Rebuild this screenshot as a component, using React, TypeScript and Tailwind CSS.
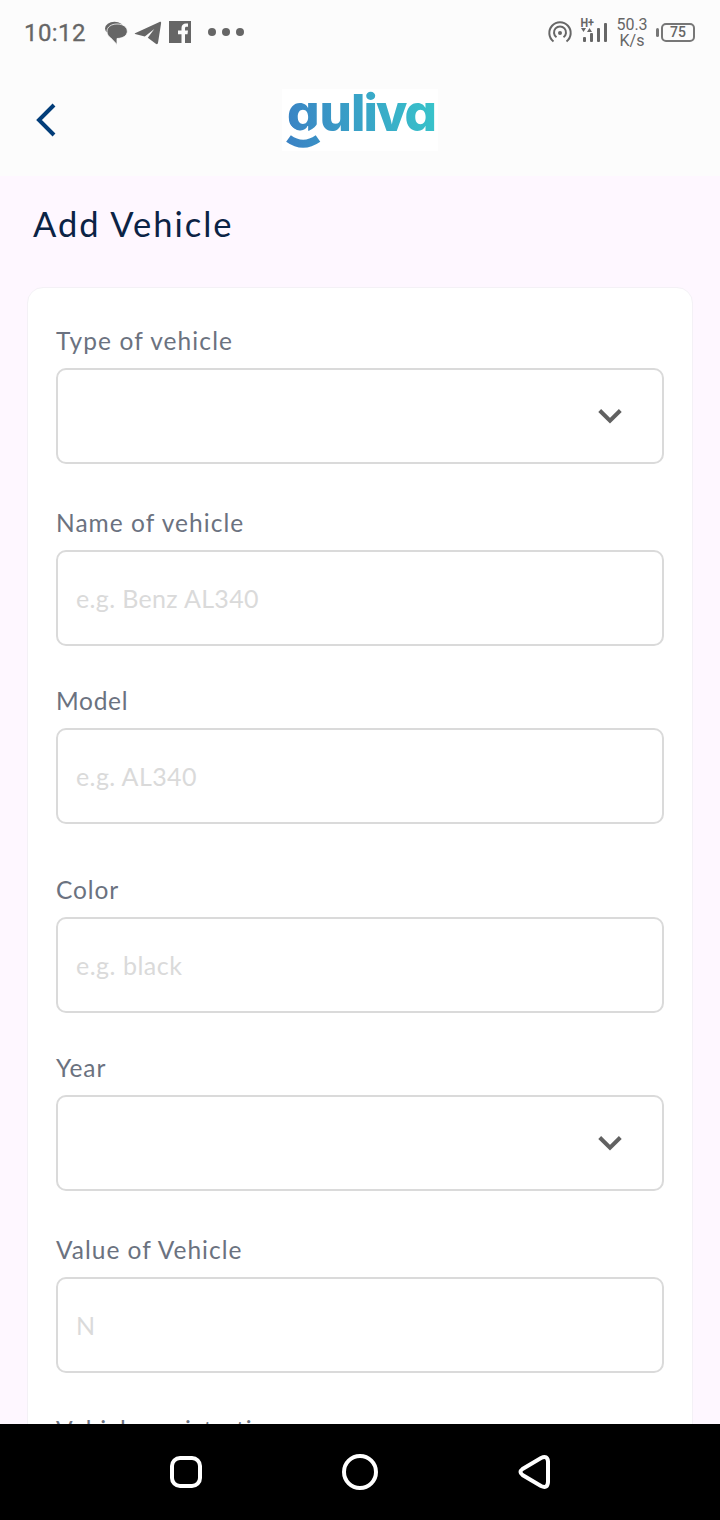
import type { ReactNode } from "react";

const labelText =
  "block h-8 whitespace-nowrap pt-px text-[24.5px] leading-8 text-[#6b7280] font-['Lato',sans-serif]";
const placeholderText =
  "block whitespace-nowrap text-[25px] leading-8 text-[#dadada] font-['Lato',sans-serif]";

function StatusBar() {
  return (
    <div className="flex h-16 items-center text-[#666666] font-['Roboto',sans-serif]">
      <span className="ml-[24px] w-[80px] pt-px text-[24px] leading-8 tracking-[0.4px] [-webkit-text-stroke:0.3px_#666666]">10:12</span>
      <svg className="h-16 w-[146px]" viewBox="104 0 146 64" fill="currentColor">
        <ellipse cx="114.500" cy="28.500" rx="9.500" ry="6.800" />
        <path
          d="M117 24c6 0 10.300 3 10.300 7.300 0 4.200-4 7-10.300 7.200v6l-6.400-6.700c-2.400-1.300-3.600-3.700-3.600-6.500 0-4.300 4.300-7.300 10-7.300z"
          stroke="#fcfcfc"
          strokeWidth="0.8"
        />
        <path d="M135 33.200 159.500 22c1.200-.5 1.800 0 1.600 1.300L158 43c-.3 1.300-1.200 1.400-2.200.7l-8-6 6.500-8.700-9.500 7.500-8.800-2.300c-1.300-.3-1.600-.6-1-1z" />
        <rect x="169" y="21" width="22" height="22" />
        <path
          d="M181.500 43v-8.800H178v-3.600h3.500V28c0-3 1.800-4.600 4.500-4.600h2v3.400h-1.400c-1.200 0-1.600.5-1.600 1.700v2.100h3l-.5 3.600H185V43z"
          fill="#fcfcfc"
        />
        <circle cx="212" cy="32" r="4" />
        <circle cx="226" cy="32" r="4" />
        <circle cx="240" cy="32" r="4" />
      </svg>
      <svg className="ml-[294px] h-16 w-[64px]" viewBox="544 0 64 64" fill="none" stroke="currentColor" strokeWidth="2">
        <path d="M553.500 41.500a10.700 10.700 0 1 1 13 0" />
        <path d="M556.500 37.300a6 6 0 1 1 7 0" />
        <circle cx="560" cy="33" r="2" fill="currentColor" stroke="none" />
        <g fill="currentColor" stroke="none">
          <rect x="583" y="37" width="3" height="5" rx="1" />
          <rect x="590" y="33" width="3" height="9" rx="1" />
          <rect x="597" y="28" width="3" height="14" rx="1" />
          <rect x="604" y="23" width="3" height="19" rx="1" />
          <path d="M581 28h5l-2.500 4zM587 32h5l-2.500-4z" />
          <text x="580.500" y="26.500" fontSize="12" fontWeight="700" textLength="13.500" lengthAdjust="spacingAndGlyphs">H+</text>
        </g>
      </svg>
      <div className="ml-[7px] flex w-[34px] flex-col items-center pt-px text-[16px] leading-4">
        <span>50.3</span>
        <span>K/s</span>
      </div>
      <span className="ml-[7px] h-[9px] w-[3px] rounded-sm bg-[#777777]" />
      <span className="ml-[2px] flex h-[19px] w-[34px] items-center justify-center rounded-[5px] border-2 border-[#777777] text-[14px] font-medium leading-none">
        75
      </span>
    </div>
  );
}

function Logo() {
  return (
    <svg className="h-[62px] w-[156px] bg-white" viewBox="282 89 156 62">
      <defs>
        <linearGradient id="brand" gradientUnits="userSpaceOnUse" x1="286" y1="140" x2="436" y2="112">
          <stop offset="0" stopColor="#3a82c4" />
          <stop offset="1" stopColor="#38c3ca" />
        </linearGradient>
        <clipPath id="bowl">
          <path d="M282 89h37v28a15.500 14.500 0 0 1-31 0h-6z" />
          <rect x="319" y="89" width="119" height="42.500" />
        </clipPath>
      </defs>
      <text
        x="287 319.500 351 363.500 376 404.500"
        y="131"
        fill="url(#brand)"
        clipPath="url(#bowl)"
        className="text-[51px] font-extrabold font-['Inter',sans-serif] [font-feature-settings:'cv11']"
      >
        guliva
      </text>
      <path d="M288.500 138.500q14.500 10.500 29.500 0" fill="none" stroke="url(#brand)" strokeWidth="8" />
    </svg>
  );
}

function Header() {
  return (
    <div className="grid h-[112px] grid-cols-[282px_156px_1fr] items-center">
      <svg className="ml-[32px] h-10 w-8" viewBox="32 100 32 40" fill="none" stroke="#023d79" strokeWidth="4">
        <path d="M54 105 39 120l15 15" />
      </svg>
      <Logo />
    </div>
  );
}

function Field({ label, tracking, className, children }: { label: string; tracking: string; className: string; children?: ReactNode }) {
  return (
    <div className={className}>
      <span className={`${labelText} ${tracking}`}>{label}</span>
      <div className="mt-3 flex h-24 items-center rounded-[10px] border-2 border-[#dadada] pl-[18px] pr-[40px]">{children}</div>
    </div>
  );
}

function Chevron() {
  return (
    <svg className="ml-auto h-6 w-6" viewBox="0 0 24 24" fill="none" stroke="#616161" strokeWidth="4">
      <path d="M1.700 6.500 12 16.700 22.300 6.500" />
    </svg>
  );
}

function NavBar() {
  return (
    <div className="flex h-24 items-center bg-black">
      <svg className="h-24 w-full" viewBox="0 0 720 96" fill="none" stroke="white" strokeWidth="4">
        <rect x="172" y="34" width="28" height="28" rx="8" />
        <circle cx="360" cy="48" r="16" />
        <path d="M522.500 45 541 34Q547.500 31 548 37.500v20.500Q547.500 65 541 62L522.500 51Q518.500 48 522.500 45z" />
      </svg>
    </div>
  );
}

export default function App() {
  return (
    <div className="flex h-[1520px] w-[720px] flex-col overflow-hidden bg-[#fef7ff]">
      <div className="h-44 shrink-0 bg-[#fcfcfc]">
        <StatusBar />
        <Header />
      </div>
      <main className="h-[1248px] shrink-0 overflow-hidden px-[27px]">
        <h1 className="mt-[27px] ml-[6px] h-[42px] whitespace-nowrap text-[34.500px] leading-[42px] tracking-[2px] text-[#0b2345] font-['Lato',sans-serif]">
          Add Vehicle
        </h1>
        <section className="mt-[42px] h-[1300px] rounded-[16px] border border-[#f4f1f6] bg-white px-[28px] pt-[36px]">
          <Field label="Type of vehicle" tracking="tracking-[1.1px]" className="mb-[42px]">
            <Chevron />
          </Field>
          <Field label="Name of vehicle" tracking="tracking-[1.05px]" className="mb-[38px]">
            <span className={`${placeholderText} tracking-[0.35px]`}>e.g. Benz AL340</span>
          </Field>
          <Field label="Model" tracking="tracking-[0.7px]" className="mb-[48.500px]">
            <span className={`${placeholderText} tracking-[0.4px]`}>e.g. AL340</span>
          </Field>
          <Field label="Color" tracking="tracking-[0.9px]" className="mb-[38px]">
            <span className={`${placeholderText} tracking-[0.5px]`}>e.g. black</span>
          </Field>
          <Field label="Year" tracking="tracking-[0.9px]" className="mb-[42px]">
            <Chevron />
          </Field>
          <Field label="Value of Vehicle" tracking="tracking-[1px]" className="mb-[40px]">
            <span className={placeholderText}>N</span>
          </Field>
          <span className={`${labelText} tracking-[1px]`}>Vehicle registration</span>
        </section>
      </main>
      <NavBar />
    </div>
  );
}
